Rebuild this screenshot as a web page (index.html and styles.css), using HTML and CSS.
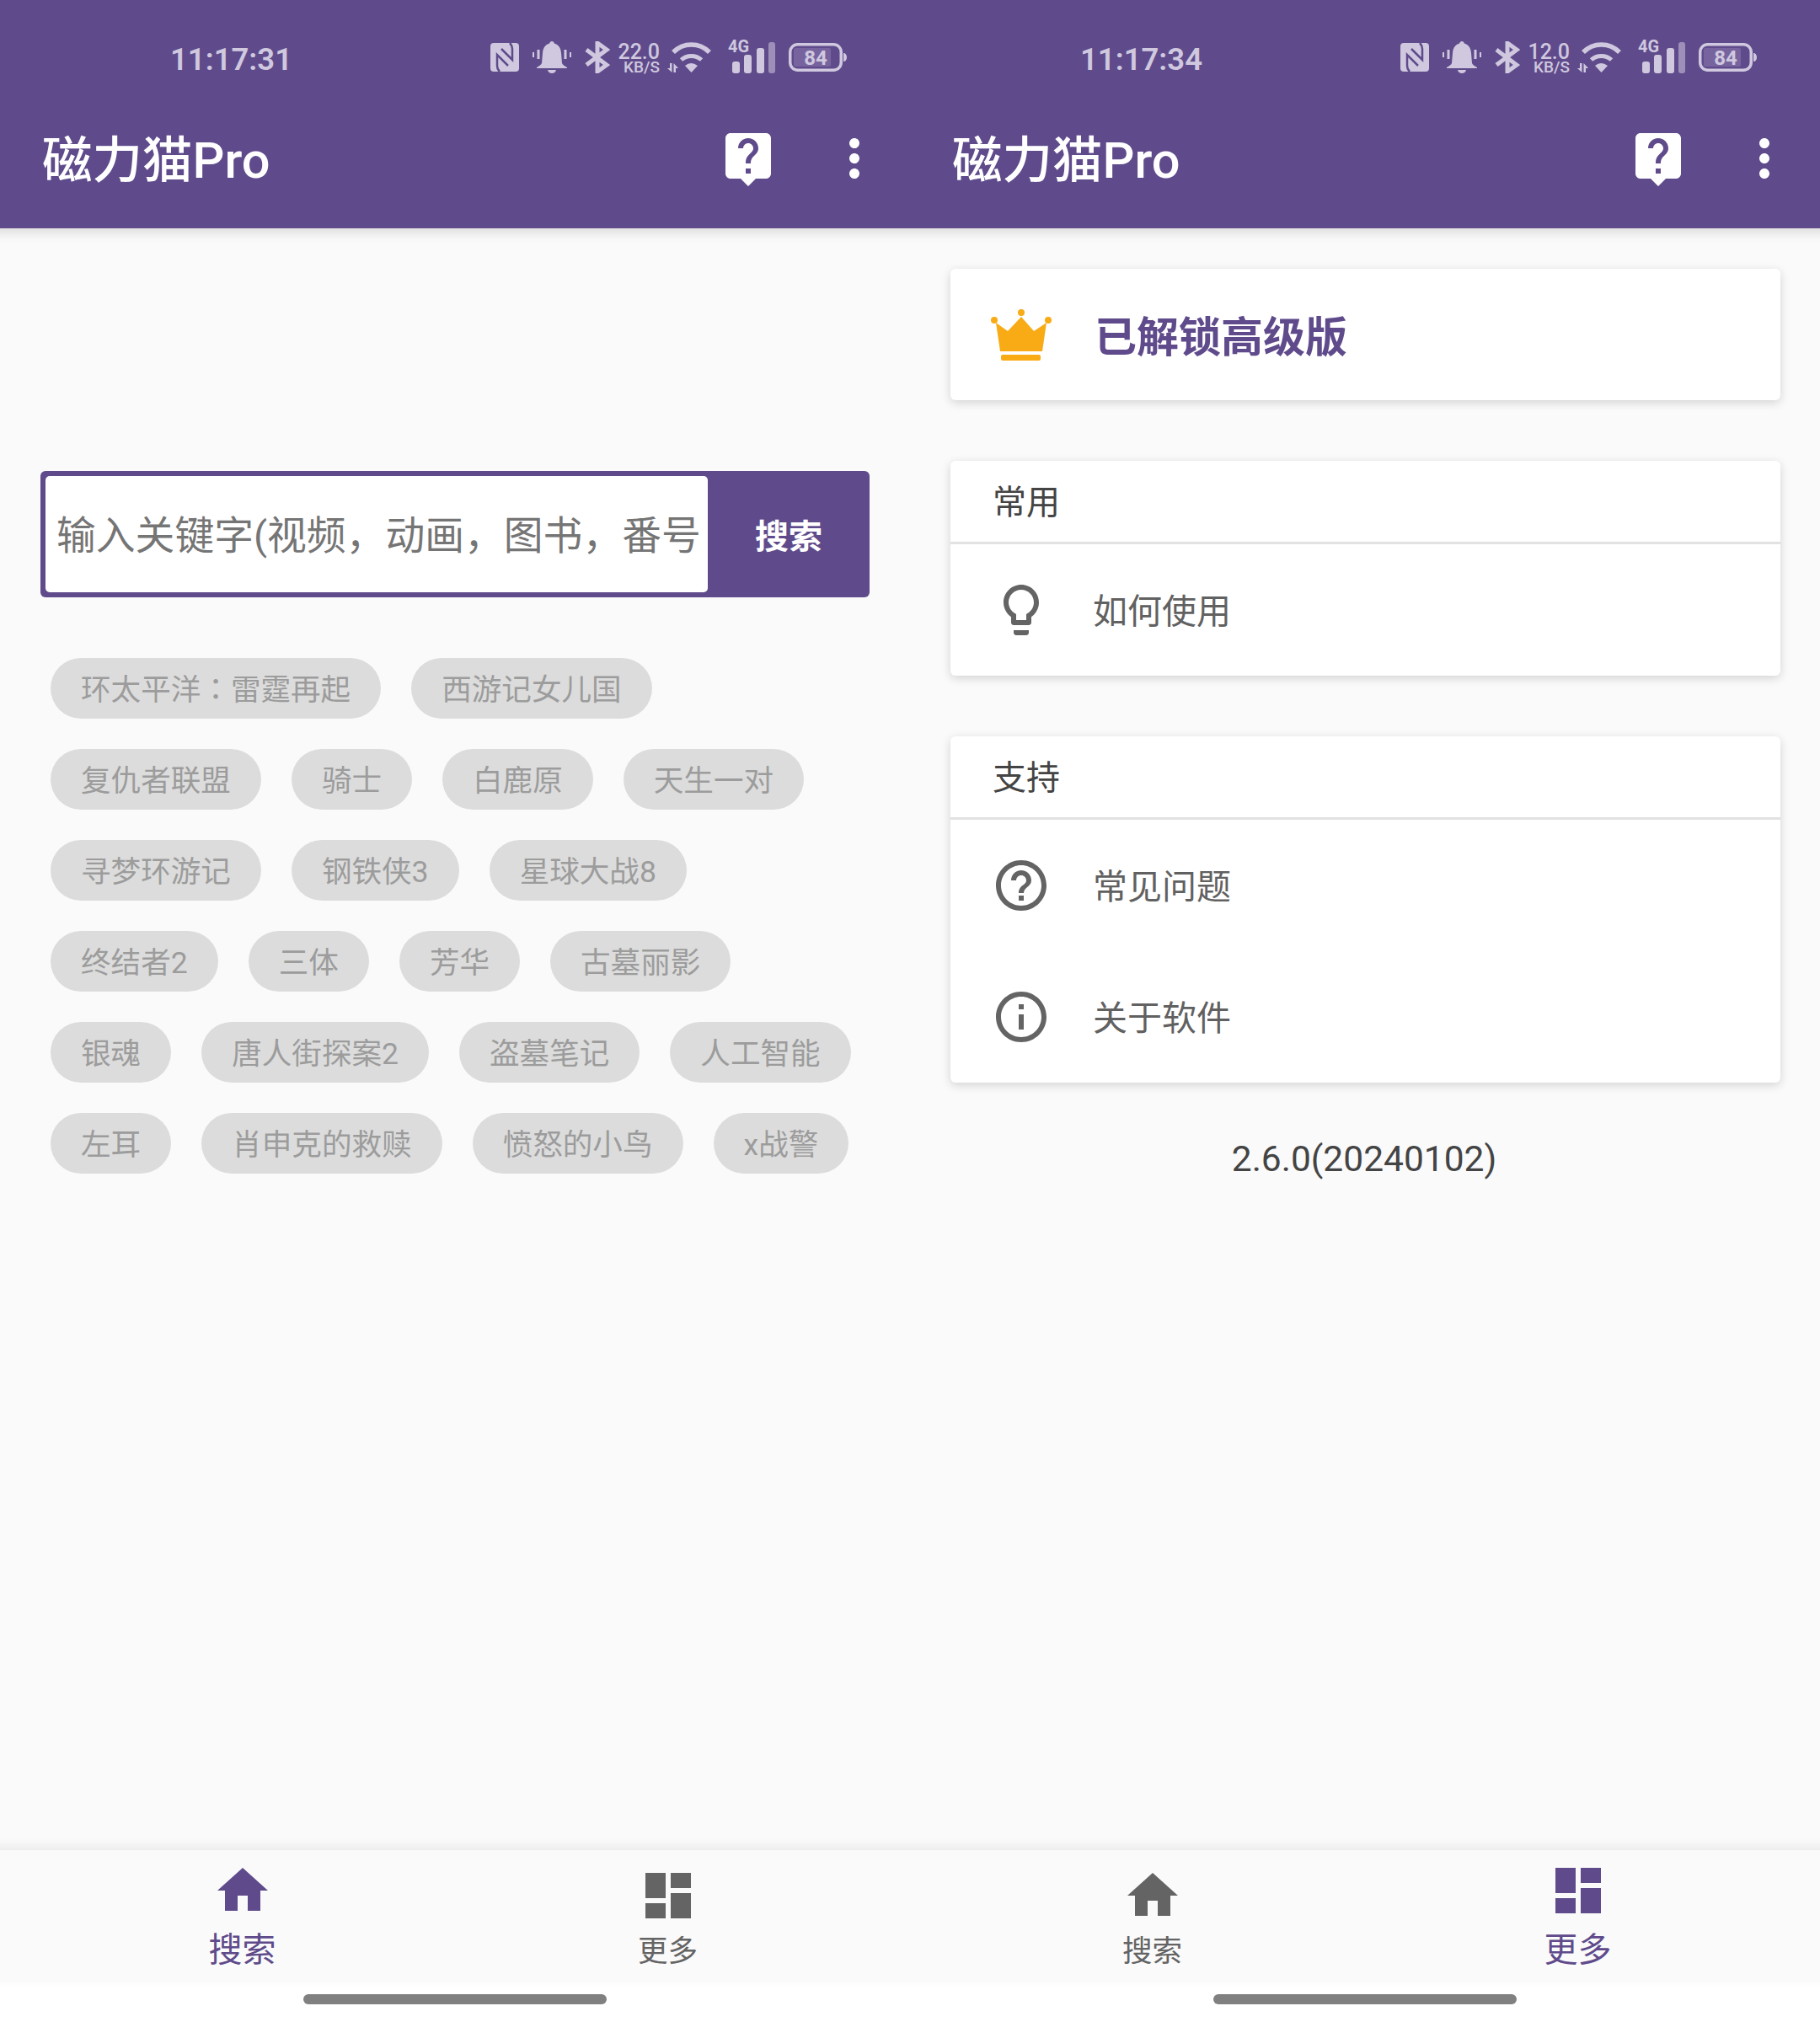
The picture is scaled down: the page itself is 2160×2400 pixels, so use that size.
FILE: index.html
```html
<!DOCTYPE html>
<html lang="zh-CN">
<head>
    <meta charset="UTF-8">
    <title>磁力猫Pro</title>
    <link rel="stylesheet" href="styles.css">
</head>
<body>
    <svg class="sprite" width="0" height="0">
        <symbol id="i-nfc" viewBox="0 0 34 34">
            <rect width="34" height="34" rx="4"/>
            <path d="M11 34C9 32 8 30 8 27V14L21 27" fill="none" stroke="#5f4b8b" stroke-width="2.500"/>
            <path d="M23 0C25 2 26 4 26 7V20L13 7" fill="none" stroke="#5f4b8b" stroke-width="2.500"/>
        </symbol>
        <symbol id="i-bell" viewBox="0 0 46 38">
            <path d="M23 0c1.600 0 2.500 1 2.800 2.600C31 4 33.500 8 34 14L35 26C35.500 28 38 29 41 31V32H5V31C8 29 10.500 28 11 26L12 14C12.500 8 15 4 20.200 2.600C20.500 1 21.400 0 23 0Z"/>
            <path d="M18 34h10c-.5 2.500-2.500 4-5 4s-4.500-1.500-5-4z"/>
            <path d="M0 13h2v6H0zM5.500 10h3v11h-3zM37.500 10h3v11h-3zM44 13h2v6h-2z"/>
        </symbol>
        <symbol id="i-bt" viewBox="0 0 30 38">
            <path d="M2 10L26 28L15 36V2L26 10L2 28" fill="none" stroke="currentColor" stroke-width="5"/>
        </symbol>
        <symbol id="i-wifi" viewBox="0 0 54 36">
            <path d="M7 12A30 30 0 0 1 50 12" fill="none" stroke="currentColor" stroke-width="5.500"/>
            <path d="M16.500 21A18 18 0 0 1 40.500 21" fill="none" stroke="currentColor" stroke-width="5"/>
            <path d="M21 28Q28 22 36 28L28.500 36Z"/>
            <path d="M3 25h2.500v11L0 31h3zM7.500 25L13 31h-3v5H7.500z"/>
        </symbol>
        <symbol id="i-help-chat" viewBox="0 0 24 24">
            <path d="M19 2H5c-1.110 0-2 .9-2 2v14c0 1.100.89 2 2 2h4l3 3 3-3h4c1.100 0 2-.9 2-2V4c0-1.100-.9-2-2-2zm-6 16h-2v-2h2v2zm2.070-7.750l-.9.92C13.450 11.900 13 12.500 13 14h-2v-.5c0-1.100.45-2.100 1.170-2.830l1.240-1.260c.37-.36.59-.86.59-1.410 0-1.100-.9-2-2-2s-2 .9-2 2H8c0-2.210 1.790-4 4-4s4 1.790 4 4c0 .88-.36 1.680-.93 2.250z"/>
        </symbol>
        <symbol id="i-more" viewBox="0 0 24 24">
            <path d="M12 8c1.100 0 2-.9 2-2s-.9-2-2-2-2 .9-2 2 .9 2 2 2zm0 2c-1.100 0-2 .9-2 2s.9 2 2 2 2-.9 2-2-.9-2-2-2zm0 6c-1.100 0-2 .9-2 2s.9 2 2 2 2-.9 2-2-.9-2-2-2z"/>
        </symbol>
        <symbol id="i-home" viewBox="0 0 24 24">
            <path d="M10 20v-6h4v6h5v-8h3L12 3 2 12h3v8z"/>
        </symbol>
        <symbol id="i-dashboard" viewBox="0 0 24 24">
            <path d="M3 13h8V3H3v10zm0 8h8v-6H3v6zm10 0h8V11h-8v10zm0-18v6h8V3h-8z"/>
        </symbol>
    </svg>

    <div class="screens">
        <!-- search tab -->
        <div class="phone">
            <header class="app-header">
                <div class="status">
                    <span class="time">11:17:31</span>
                    <div class="status-icons">
                        <svg class="si" width="34" height="34"><use href="#i-nfc"/></svg>
                        <svg class="si gap-16" width="46" height="38"><use href="#i-bell"/></svg>
                        <svg class="si gap-16" width="30" height="38"><use href="#i-bt"/></svg>
                        <div class="speed"><span class="speed-num">22.0</span><span class="speed-unit">KB/S</span></div>
                        <svg class="si gap-9" width="54" height="36"><use href="#i-wifi"/></svg>
                        <svg class="si gap-18 signal" width="56" height="44" viewBox="0 -4 56 44">
                            <text class="net-text" x="0" y="15">4G</text>
                            <rect x="5" y="26" width="9" height="14" rx="3"/>
                            <rect x="19" y="18" width="9" height="22" rx="3"/>
                            <rect x="34" y="10" width="9" height="30" rx="3"/>
                            <rect class="bar-dim" x="48" y="3" width="8" height="37" rx="3"/>
                        </svg>
                        <svg class="si gap-16" width="70" height="34" viewBox="0 0 70 34">
                            <rect class="batt-shell" x="1.750" y="1.750" width="60.500" height="30.500" rx="9"/>
                            <rect class="batt-fill" x="6" y="6" width="44" height="22" rx="2"/>
                            <path d="M65 12c2.500 0 4 2 4 5s-1.500 5-4 5z"/>
                            <text class="batt-text" x="32" y="26">84</text>
                        </svg>
                    </div>
                </div>
                <div class="toolbar">
                    <h1 class="title">磁力猫Pro</h1>
                    <svg class="tool-icon" width="72" height="72"><use href="#i-help-chat"/></svg>
                    <svg class="tool-icon more" width="72" height="72"><use href="#i-more"/></svg>
                </div>
            </header>

            <main class="content search-page">
                <form class="search-box">
                    <input class="search-input" type="text" placeholder="输入关键字(视频，动画，图书，番号">
                    <button class="search-btn" type="button">搜索</button>
                </form>
                <div class="chips">
                    <span class="chip chip-tc" lang="zh-TW">环太平洋：雷霆再起</span>
                    <span class="chip">西游记女儿国</span>
                    <span class="chip">复仇者联盟</span>
                    <span class="chip">骑士</span>
                    <span class="chip">白鹿原</span>
                    <span class="chip">天生一对</span>
                    <span class="chip">寻梦环游记</span>
                    <span class="chip">钢铁侠3</span>
                    <span class="chip">星球大战8</span>
                    <span class="chip">终结者2</span>
                    <span class="chip">三体</span>
                    <span class="chip">芳华</span>
                    <span class="chip">古墓丽影</span>
                    <span class="chip">银魂</span>
                    <span class="chip">唐人街探案2</span>
                    <span class="chip">盗墓笔记</span>
                    <span class="chip">人工智能</span>
                    <span class="chip">左耳</span>
                    <span class="chip">肖申克的救赎</span>
                    <span class="chip">愤怒的小鸟</span>
                    <span class="chip">x战警</span>
                </div>
            </main>

            <nav class="bottom-nav">
                <div class="nav-item active">
                    <svg class="nav-icon" width="72" height="72"><use href="#i-home"/></svg>
                    <span class="nav-label">搜索</span>
                </div>
                <div class="nav-item">
                    <svg class="nav-icon" width="72" height="72"><use href="#i-dashboard"/></svg>
                    <span class="nav-label">更多</span>
                </div>
            </nav>
            <div class="home-area"><div class="home-bar"></div></div>
        </div>

        <!-- more tab -->
        <div class="phone">
            <header class="app-header">
                <div class="status">
                    <span class="time">11:17:34</span>
                    <div class="status-icons">
                        <svg class="si" width="34" height="34"><use href="#i-nfc"/></svg>
                        <svg class="si gap-16" width="46" height="38"><use href="#i-bell"/></svg>
                        <svg class="si gap-16" width="30" height="38"><use href="#i-bt"/></svg>
                        <div class="speed"><span class="speed-num">12.0</span><span class="speed-unit">KB/S</span></div>
                        <svg class="si gap-9" width="54" height="36"><use href="#i-wifi"/></svg>
                        <svg class="si gap-18 signal" width="56" height="44" viewBox="0 -4 56 44">
                            <text class="net-text" x="0" y="15">4G</text>
                            <rect x="5" y="26" width="9" height="14" rx="3"/>
                            <rect x="19" y="18" width="9" height="22" rx="3"/>
                            <rect x="34" y="10" width="9" height="30" rx="3"/>
                            <rect class="bar-dim" x="48" y="3" width="8" height="37" rx="3"/>
                        </svg>
                        <svg class="si gap-16" width="70" height="34" viewBox="0 0 70 34">
                            <rect class="batt-shell" x="1.750" y="1.750" width="60.500" height="30.500" rx="9"/>
                            <rect class="batt-fill" x="6" y="6" width="44" height="22" rx="2"/>
                            <path d="M65 12c2.500 0 4 2 4 5s-1.500 5-4 5z"/>
                            <text class="batt-text" x="32" y="26">84</text>
                        </svg>
                    </div>
                </div>
                <div class="toolbar">
                    <h1 class="title">磁力猫Pro</h1>
                    <svg class="tool-icon" width="72" height="72"><use href="#i-help-chat"/></svg>
                    <svg class="tool-icon more" width="72" height="72"><use href="#i-more"/></svg>
                </div>
            </header>

            <main class="content more-page">
                <section class="card premium">
                    <svg class="row-icon crown" width="72" height="61" viewBox="0 0 72 61">
                        <circle cx="4" cy="13" r="4"/>
                        <circle cx="36" cy="4" r="4"/>
                        <circle cx="68" cy="13" r="4"/>
                        <path d="M36 9L51 26L66 16L61 50H11L6 16L20 26Z"/>
                        <rect x="12" y="54" width="47" height="7" rx="2"/>
                    </svg>
                    <span class="premium-text">已解锁高级版</span>
                </section>

                <section class="card">
                    <div class="card-head">常用</div>
                    <div class="row">
                        <svg class="row-icon" width="72" height="72" viewBox="0 0 24 24">
                            <path d="M9 21c0 .55.45 1 1 1h4c.55 0 1-.45 1-1v-1H9v1zm3-19C8.140 2 5 5.140 5 9c0 2.380 1.190 4.470 3 5.740V17c0 .55.45 1 1 1h6c.55 0 1-.45 1-1v-2.260c1.810-1.270 3-3.360 3-5.740 0-3.860-3.140-7-7-7zm2.850 11.100l-.85.6V16h-4v-2.300l-.85-.6C7.800 12.160 7 10.630 7 9c0-2.760 2.240-5 5-5s5 2.240 5 5c0 1.630-.8 3.160-2.150 4.100z"/>
                        </svg>
                        <span class="row-text">如何使用</span>
                    </div>
                </section>

                <section class="card">
                    <div class="card-head">支持</div>
                    <div class="row">
                        <svg class="row-icon" width="72" height="72" viewBox="0 0 24 24">
                            <path d="M11 18h2v-2h-2v2zm1-16C6.480 2 2 6.480 2 12s4.480 10 10 10 10-4.480 10-10S17.520 2 12 2zm0 18c-4.410 0-8-3.590-8-8s3.590-8 8-8 8 3.590 8 8-3.590 8-8 8zm0-14c-2.210 0-4 1.790-4 4h2c0-1.100.9-2 2-2s2 .9 2 2c0 2-3 1.750-3 5h2c0-2.250 3-2.500 3-5 0-2.210-1.790-4-4-4z"/>
                        </svg>
                        <span class="row-text">常见问题</span>
                    </div>
                    <div class="row">
                        <svg class="row-icon" width="72" height="72" viewBox="0 0 24 24">
                            <path d="M11 17h2v-6h-2v6zm1-15C6.480 2 2 6.480 2 12s4.480 10 10 10 10-4.480 10-10S17.520 2 12 2zm0 18c-4.410 0-8-3.590-8-8s3.590-8 8-8 8 3.590 8 8-3.590 8-8 8zM11 9h2V7h-2v2z"/>
                        </svg>
                        <span class="row-text">关于软件</span>
                    </div>
                </section>

                <p class="version">2.6.0(20240102)</p>
            </main>

            <nav class="bottom-nav">
                <div class="nav-item">
                    <svg class="nav-icon" width="72" height="72"><use href="#i-home"/></svg>
                    <span class="nav-label">搜索</span>
                </div>
                <div class="nav-item active">
                    <svg class="nav-icon" width="72" height="72"><use href="#i-dashboard"/></svg>
                    <span class="nav-label">更多</span>
                </div>
            </nav>
            <div class="home-area"><div class="home-bar"></div></div>
        </div>
    </div>
</body>
</html>
```

FILE: styles.css
```css
body {
    margin: 0;
    background: #ffffff;
    font-family: Roboto, "Noto Sans CJK SC", sans-serif;
}

.sprite {
    display: block;
    height: 0;
}

.screens {
    display: flex;
    width: 2160px;
    height: 2400px;
}

.phone {
    display: flex;
    flex-direction: column;
    width: 1080px;
    height: 2400px;
    overflow: hidden;
    background: #ffffff;
}

/* header */
.app-header {
    position: relative;
    z-index: 2;
    height: 271px;
    margin: 0 -30px;
    padding: 0 30px;
    background: #5f4b8b;
    box-shadow: 0 4px 14px rgba(0,0,0,0.14);
}

.status {
    box-sizing: border-box;
    display: flex;
    justify-content: space-between;
    align-items: center;
    height: 104px;
    padding: 46px 74px 14px 202px;
    color: #cfc8df;
}

.time {
    margin-top: 4px;
    font-size: 36.500px;
    font-weight: 600;
}

.status-icons {
    display: flex;
    align-items: center;
}

.si {
    display: block;
    fill: currentColor;
}

.gap-9 { margin-left: 9px; }
.gap-16 { margin-left: 16px; }
.gap-18 { margin-left: 18px; }

.signal {
    margin-top: -6px;
}

.speed {
    display: flex;
    flex-direction: column;
    align-items: flex-end;
    width: 50px;
    margin-left: 9px;
    margin-top: 4px;
    font-weight: 500;
}

.speed-num {
    font-size: 25px;
    line-height: 20px;
}

.speed-unit {
    font-size: 19px;
    line-height: 16px;
}

.net-text {
    font-size: 20px;
    font-weight: 700;
}

.bar-dim {
    opacity: 0.55;
}

.batt-shell {
    fill: none;
    stroke: currentColor;
    stroke-width: 3.5;
}

.batt-fill {
    fill: #77649f;
}

.batt-text {
    font-size: 24px;
    font-weight: 700;
    text-anchor: middle;
}

.toolbar {
    display: flex;
    align-items: center;
    height: 167px;
    box-sizing: border-box;
    padding: 0 30px 0 50px;
    color: #ffffff;
}

.title {
    flex: 1;
    margin: 0;
    padding-bottom: 6px;
    font-size: 59.500px;
    font-weight: 500;
}

.tool-icon {
    display: block;
    fill: currentColor;
}

.tool-icon.more {
    margin-left: 54px;
}

/* page body */
.content {
    flex: 1;
    box-sizing: border-box;
    background: #fafafa;
}

.search-page {
    padding-top: 288px;
}

.search-box {
    display: flex;
    box-sizing: border-box;
    height: 150px;
    margin: 0 48px;
    padding: 6px 0 6px 6px;
    border-radius: 6px;
    background: #5f4b8b;
}

.search-input {
    flex: 1;
    min-width: 0;
    padding: 3px 5px 0 13px;
    border: none;
    border-radius: 5px;
    background: #ffffff;
    font-family: inherit;
    font-size: 46.800px;
    outline: none;
}

.search-input::placeholder {
    color: #757575;
    opacity: 1;
}

.search-btn {
    width: 192px;
    padding: 0;
    border: none;
    background: transparent;
    color: #ffffff;
    font-family: inherit;
    font-size: 40px;
    font-weight: 700;
}

.chips {
    display: flex;
    flex-wrap: wrap;
    gap: 36px;
    width: 960px;
    margin: 72px 0 0 60px;
}

.chip {
    height: 72px;
    padding: 0 36px;
    border-radius: 36px;
    background: #dcdcdc;
    color: #9c9c9c;
    font-size: 35.600px;
    line-height: 76px;
}

.chip-tc {
    font-family: Roboto, "Noto Sans CJK TC", sans-serif;
}

.more-page {
    padding: 48px 47px 0 48px;
}

.card {
    margin-bottom: 72px;
    border-radius: 6px;
    background: #ffffff;
    box-shadow: 0 3px 12px rgba(0,0,0,0.16);
}

.premium {
    display: flex;
    align-items: center;
    height: 156px;
    padding-left: 48px;
    box-sizing: border-box;
}

.premium-text {
    margin-left: 51px;
    padding-bottom: 3px;
    color: #5f4b8b;
    font-size: 50px;
    font-weight: 700;
}

.card-head {
    height: 96px;
    padding-left: 50px;
    border-bottom: 3px solid #e2e2e2;
    color: #444444;
    font-size: 40px;
    line-height: 100px;
}

.row {
    display: flex;
    align-items: center;
    height: 156px;
    padding-left: 48px;
}

.row-icon {
    display: block;
    flex: none;
    fill: #646464;
}

.crown.row-icon {
    fill: #f8ab15;
}

.row-text {
    margin-left: 49px;
    padding-bottom: 4px;
    color: #616161;
    font-size: 41px;
}

.version {
    margin: -5px 0 0 -3px;
    color: #444444;
    font-size: 42.500px;
    line-height: 48px;
    text-align: center;
}

/* bottom tabs */
.bottom-nav {
    position: relative;
    z-index: 2;
    display: flex;
    height: 156px;
    box-sizing: border-box;
    margin: 0 -30px;
    padding: 0 65px;
    background: #fafafa;
    box-shadow: 0 -4px 12px rgba(0,0,0,0.07);
}

.nav-item {
    display: flex;
    flex: 1;
    flex-direction: column;
    align-items: center;
    padding-top: 18px;
    color: #646464;
}

.nav-item.active {
    padding-top: 12px;
    color: #5f4b8b;
}

.nav-icon {
    display: block;
    fill: currentColor;
}

.nav-label {
    margin-top: 6px;
    font-size: 35.500px;
    line-height: 48px;
}

.nav-item.active .nav-label {
    margin-top: 11px;
    font-size: 40px;
}

.home-area {
    display: flex;
    justify-content: center;
    height: 48px;
    padding-top: 15px;
    box-sizing: border-box;
    background: #ffffff;
}

.home-bar {
    width: 360px;
    height: 12px;
    border-radius: 6px;
    background: #808080;
}
```
